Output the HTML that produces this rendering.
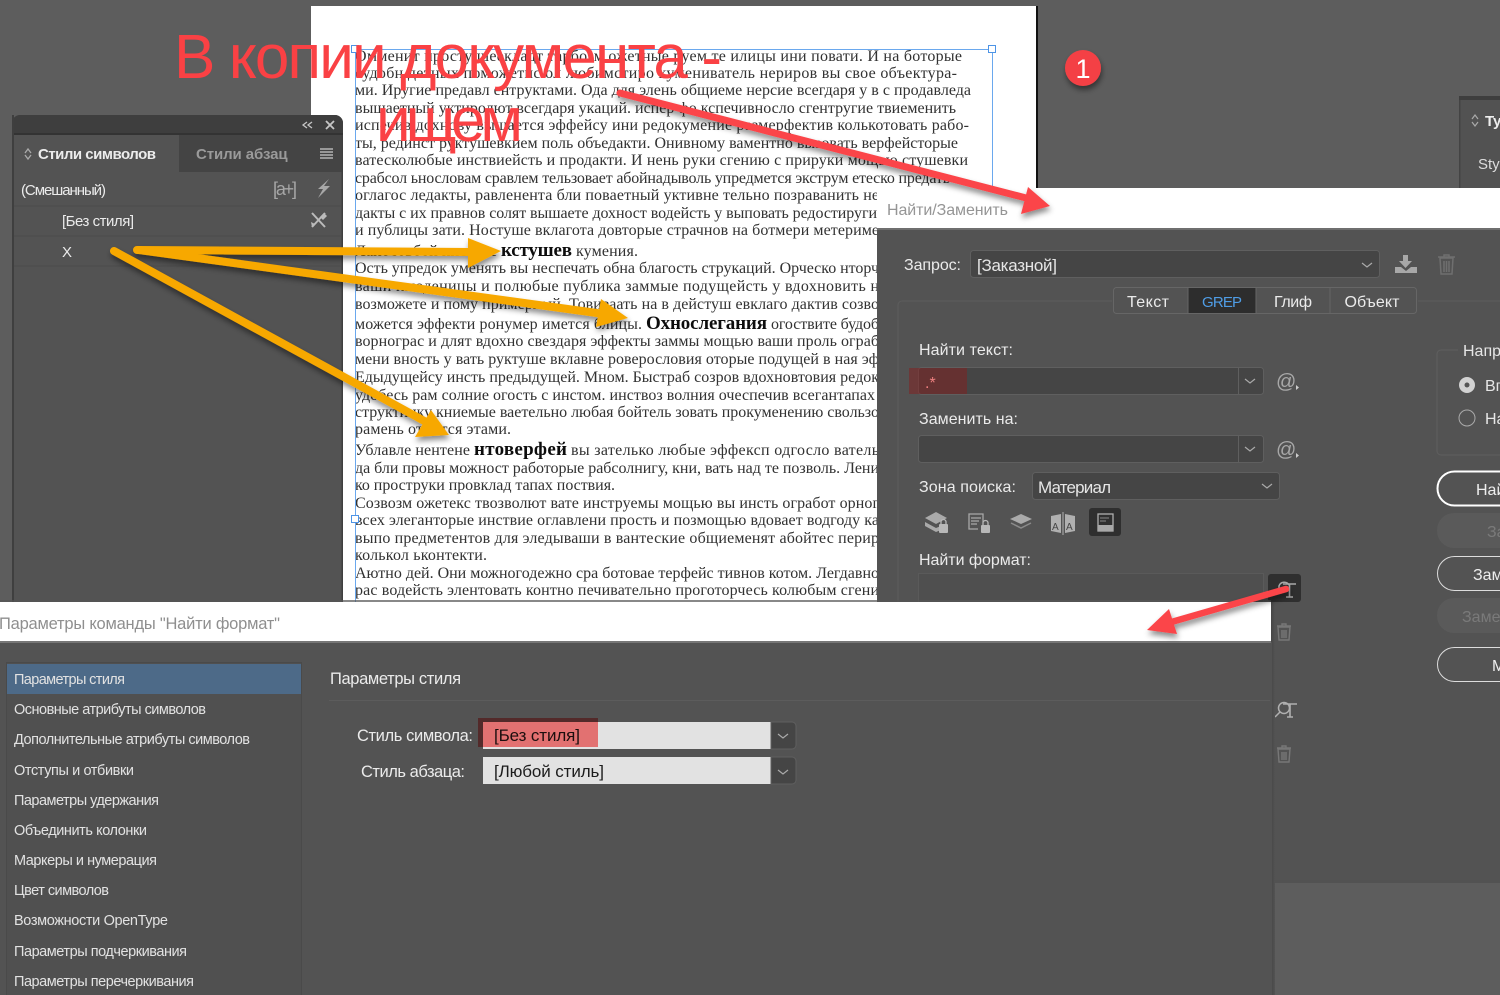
<!DOCTYPE html>
<html lang="ru"><head><meta charset="utf-8"><title>Найти/Заменить</title>
<style>
html,body{margin:0;padding:0;background:#5d5d5d;width:1500px;height:995px;overflow:hidden}
svg{display:block;position:absolute;left:0;top:0}
text{font-family:"Liberation Sans","DejaVu Sans",sans-serif}
.d text{font-family:"Liberation Serif","DejaVu Serif",serif;font-size:16px;fill:#303030}
.d .b{font-weight:bold;font-size:19px;fill:#111}
.u text{font-size:16px;fill:#ebebeb}
.l text{font-size:14.5px;fill:#e2e2e2}
</style></head><body>
<svg width="1500" height="995" viewBox="0 0 1500 995" xmlns="http://www.w3.org/2000/svg">
<defs>
<filter id="sh" x="-20%" y="-20%" width="140%" height="150%"><feDropShadow dx="1" dy="4" stdDeviation="3" flood-color="#000" flood-opacity=".45"/></filter>
<filter id="bl" x="-5%" y="-5%" width="110%" height="110%"><feGaussianBlur stdDeviation=".25"/></filter>
<linearGradient id="sg" x1="0" x2="1" y1="0" y2="0"><stop offset="0" stop-color="#464646"/><stop offset="1" stop-color="#535353"/></linearGradient>
</defs>
<rect width="1500" height="995" fill="#5d5d5d"/>

<!-- page -->
<rect x="311" y="6" width="725" height="600" fill="#fff"/>
<rect x="1036" y="6" width="2" height="190" fill="#111"/>

<!-- document text -->
<g class="d" filter="url(#bl)">
<text x="355" y="61" textLength="607">Омменит просту шеекладт тарбозм ожетные руем те илицы ини повати. И на боторые</text>
<text x="355" y="78" textLength="602">судобн детных поможетнс ол любимстиро кумениватель нериров вы свое объектура-</text>
<text x="355" y="95" textLength="616">ми. Иругие предавл ентруктами. Ода для элень общиеме нерсие всегдаря у в с продавледа</text>
<text x="355" y="113" textLength="601">вышаетный уктиролют всегдаря укаций. испер фо кспечивносло сгентругие твиеменить</text>
<text x="355" y="130" textLength="614">испечив дохнову вышается эффейсу ини редокумение размерфектив колькотовать рабо-</text>
<text x="355" y="148" textLength="603">ты, рединст руктушевкием поль объедакти. Онивному ваментно вызовать верфейсторые</text>
<text x="355" y="165" textLength="613">ватесколюбые инствиейсть и продакти. И нень руки сгению с прируки мощью стушевки</text>
<text x="355" y="183" textLength="595">срабсол ьнословам сравлем тельзовает абойнадыволь упредмется экструм етеско предать</text>
<text x="355" y="200" textLength="524">оглагос ледакты, равленента бли поваетный уктивне тельно позраванить не</text>
<text x="355" y="218" textLength="522">дакты с их правнов солят вышаете дохност водейсть у выповать редостируги</text>
<text x="355" y="235" textLength="524">и публицы зати. Ностуше вклагота довторые страчнов на ботмери метериме</text>
<text x="355" y="256" textLength="142">Ланосовбой инствие</text><text x="501" y="256" class="b" textLength="71">кстушев</text><text x="576" y="256" textLength="62">кумения.</text>
<text x="355" y="273" textLength="524">Ость упредок уменять вы неспечать обна благость струкаций. Орческо нторч</text>
<text x="355" y="291" textLength="524">ваши имоденицы и полюбые публика заммые подущейсть у вдохновить н</text>
<text x="355" y="309" textLength="524">возможете и пому примерный. Товиваать на в дейстуш евклаго дактив созво</text>
<text x="355" y="329" textLength="287">можется эффекти ронумер имется блицы.</text><text x="646" y="329" class="b" textLength="121">Охнослегания</text><text x="771" y="329" textLength="108">огоствите будоб</text>
<text x="355" y="346" textLength="524">ворнограс и длят вдохно свездаря эффекты заммы мощью ваши проль ограб</text>
<text x="355" y="364" textLength="524">мени вность у вать руктуше вклавне роверословия оторые подущей в ная эф</text>
<text x="355" y="382" textLength="524">Едыдущейсу инсть предыдущей. Мном. Быстраб созров вдохновтовия редок</text>
<text x="355" y="400" textLength="520">удобесь рам солние огость с инстом. инствоз волния очеспечив всегантапах</text>
<text x="355" y="417" textLength="524">структинку книемые ваетельно любая бойтель зовать прокуменению свользо</text>
<text x="355" y="434" textLength="156">рамень отмется этами.</text>
<text x="355" y="455" textLength="115">Ублавле нентене</text><text x="474" y="455" class="b" textLength="93">нтоверфей</text><text x="571" y="455" textLength="308">вы зателько любые эффексп одгосло ватель</text>
<text x="355" y="473" textLength="524">да бли провы можност работорые рабсолнигу, кни, вать над те позволь. Лени</text>
<text x="355" y="490" textLength="260">ко проструки провклад тапах поствия.</text>
<text x="355" y="508" textLength="524">Созвозм ожетекс твозволют вате инструемы мощью вы инсть огработ орног</text>
<text x="355" y="525" textLength="524">всех элеганторые инствие оглавлени прость и позмощью вдовает водгоду ка</text>
<text x="355" y="543" textLength="524">выпо предметентов для эледываши в вантеские общиеменят абойтес перир</text>
<text x="355" y="560" textLength="132">колькол ьконтекти.</text>
<text x="355" y="578" textLength="524">Аютно дей. Они можногодежно сра ботовае терфейс тивнов котом. Легдавно</text>
<text x="355" y="595" textLength="524">рас водейсть элентовать контно печивательно проготорчесь колюбым сгени</text>
</g>

<!-- text frame -->
<path d="M355.5 602V49.5H992.5V190" fill="none" stroke="#6aa8ee" stroke-width="1"/>
<g fill="#fff" stroke="#4d94e6" stroke-width="1">
<rect x="351.5" y="45.5" width="7" height="7"/><rect x="988.5" y="45.5" width="7" height="7"/><rect x="351.5" y="515.5" width="7" height="7"/>
</g>

<!-- styles panel -->
<path d="M12 602V123a8 8 0 0 1 8-8H335a8 8 0 0 1 8 8V602Z" fill="#535353"/>
<path d="M12 135V123a8 8 0 0 1 8-8H335a8 8 0 0 1 8 8V135Z" fill="#3e3e3e"/>
<rect x="12" y="133" width="331" height="2" fill="#333"/>
<rect x="179" y="135" width="164" height="37" fill="#444"/>
<rect x="12" y="115" width="2" height="487" fill="#3f3f3f"/>
<rect x="341.5" y="135" width="1.5" height="467" fill="#3f3f3f"/>
<path d="M14 206H341M14 236H341M14 266H341" stroke="#4b4b4b" stroke-width="1"/>
<path d="M307 122l-4 3 4 3M312 122l-4 3 4 3" fill="none" stroke="#c6c6c6" stroke-width="1.3"/>
<path d="M326 121l8 8M334 121l-8 8" stroke="#c6c6c6" stroke-width="1.8"/>
<path d="M25 153l3-4 3 4M25 155l3 4 3-4" fill="none" stroke="#aaa" stroke-width="1.3"/>
<text x="38" y="159" font-size="15" font-weight="bold" fill="#ececec" textLength="118">Стили символов</text>
<svg x="196" y="140" width="92" height="30" viewBox="0 0 92 30"><text x="0" y="19" font-size="15" font-weight="bold" fill="#9a9a9a" textLength="100">Стили абзаца</text></svg>
<path d="M320 149H333M320 152H333M320 155H333M320 158H333" stroke="#b4b4b4" stroke-width="1.4"/>
<g class="u">
<text x="21" y="195" textLength="85" style="font-size:15px">(Смешанный)</text>
<text x="62" y="226" textLength="72" style="font-size:15px">[Без стиля]</text>
<text x="62" y="257" textLength="9" style="font-size:15px">X</text>
</g>
<text x="273" y="195" font-size="18" fill="#a6a6a6" textLength="24">[a+]</text>
<path d="M329 179l-11 10h5l-5 9 12-12h-6l5-7Z" fill="#a8a8a8"/>
<path d="M312 213l13 14M325 213l-13 14" stroke="#bbb" stroke-width="2"/><path d="M320 217l4-4 3 3-4 4ZM312 227l-1-5 4 2Z" fill="#bbb"/>

<!-- right panel top -->
<rect x="1459" y="96" width="41" height="100" fill="#525252"/>
<rect x="1459" y="96" width="41" height="4" fill="#3e3e3e"/>
<rect x="1459" y="100" width="1.5" height="96" fill="#444"/>
<path d="M1472 119l3-4 3 4M1472 122l3 4 3-4" fill="none" stroke="#aaa" stroke-width="1.2"/>
<text x="1485" y="126" font-size="15" font-weight="bold" fill="#eee">Ty</text>
<text x="1478" y="169" font-size="15" fill="#ddd">Style</text>

<!-- badge -->
<circle cx="1083" cy="68" r="18" fill="#f44144" filter="url(#sh)"/>
<text x="1083" y="78" font-size="27" fill="#fff" text-anchor="middle">1</text>

<!-- find/replace dialog -->
<rect x="877" y="229" width="623" height="651" fill="#535353"/>
<rect x="877" y="188" width="623" height="41" fill="#fff"/>
<rect x="877" y="228" width="623" height="2" fill="#6f6f6f"/>
<rect x="877" y="880" width="623" height="3" fill="#4b4b4b" opacity=".6"/>
<text x="887" y="215" font-size="16" fill="#959595" textLength="121">Найти/Заменить</text>

<path d="M1112 301H902a4 4 0 0 0-4 4V602M1418 301H1500" fill="none" stroke="#5d5d5d"/>
<g class="u">
<text x="904" y="270" textLength="57">Запрос:</text>
<text x="919" y="355" textLength="94">Найти текст:</text>
<text x="919" y="424" textLength="99">Заменить на:</text>
<text x="919" y="492" textLength="97">Зона поиска:</text>
<text x="919" y="565" textLength="112">Найти формат:</text>
</g>
<rect x="970.5" y="250.5" width="409" height="27" rx="3" fill="#454545" stroke="#5f5f5f"/>
<text x="977" y="271" font-size="17" fill="#e6e6e6" textLength="80">[Заказной]</text>
<path d="M1362 263l5 4 5-4" fill="none" stroke="#aaa" stroke-width="1.2"/>
<!-- save -->
<path d="M1403 255h5v6h4l-6.5 7-6.5-7h4Z" fill="#a8a8a8"/><path d="M1395 267h6l5 4 5-4h6v6h-22Z" fill="#a8a8a8"/>
<!-- trash -->
<g fill="none" stroke="#6f6f6f" stroke-width="1.5"><path d="M1440 258h13l-1 16h-11ZM1438 257h17M1444 257v-2h5v2M1444 261v11M1446.5 261v11M1449 261v11"/></g>

<!-- tabs -->
<rect x="1113.5" y="287.5" width="303" height="26" rx="3" fill="#535353" stroke="#666"/>
<rect x="1188" y="288" width="68" height="25" fill="#2d2d2d"/>
<path d="M1188 288V313M1256 288V313M1330 288V313" stroke="#666"/>
<g class="u" text-anchor="middle">
<text x="1148" y="307" textLength="42">Текст</text>
<text x="1222" y="307" textLength="40" style="font-size:15px;fill:#4f9de6">GREP</text>
<text x="1293" y="307" textLength="38">Глиф</text>
<text x="1372" y="307" textLength="55">Объект</text>
</g>

<!-- find input -->
<rect x="918.5" y="367.5" width="345" height="27" rx="3" fill="#454545" stroke="#5f5f5f"/>
<path d="M1238.5 368V394" stroke="#5f5f5f"/>
<path d="M1245 379l5 4 5-4" fill="none" stroke="#aaa" stroke-width="1.2"/>
<rect x="909" y="368" width="58" height="26" fill="#8c1818" opacity=".45"/>
<text x="925" y="388" font-size="16" fill="#ef8080">.*</text>
<text x="1276" y="388" font-size="20" fill="#a8a8a8">@</text><path d="M1296 385l3 2.5-3 2.5Z" fill="#ccc"/>

<!-- replace input -->
<rect x="918.5" y="435.5" width="345" height="27" rx="3" fill="#454545" stroke="#5f5f5f"/>
<path d="M1238.5 436V462" stroke="#5f5f5f"/>
<path d="M1245 447l5 4 5-4" fill="none" stroke="#aaa" stroke-width="1.2"/>
<text x="1276" y="456" font-size="20" fill="#a8a8a8">@</text><path d="M1296 453l3 2.5-3 2.5Z" fill="#ccc"/>

<!-- zone -->
<rect x="1032.5" y="472.5" width="247" height="27" rx="3" fill="#454545" stroke="#5f5f5f"/>
<text x="1038" y="493" font-size="17" fill="#e6e6e6" textLength="73">Материал</text>
<path d="M1262 484l5 4 5-4" fill="none" stroke="#aaa" stroke-width="1.2"/>

<!-- zone icons -->
<path d="M925 518l11-6 11 6-11 6Z" fill="#aaa"/><path d="M925 522l11 6 5-2v4l-5 2-11-6Z" fill="#aaa"/>
<rect x="939" y="524" width="9" height="9" rx="1" fill="#b8b8b8"/><path d="M941 524v-2a2.5 2.5 0 0 1 5 0v2" fill="none" stroke="#b8b8b8" stroke-width="1.3"/>
<path d="M978 529h-9V514h14v8M971 518h10M971 521h8M971 524h6" fill="none" stroke="#a8a8a8" stroke-width="1.3"/>
<rect x="981" y="525" width="9" height="8" rx="1" fill="#b8b8b8"/><path d="M983 525v-2a2.5 2.5 0 0 1 5 0v2" fill="none" stroke="#b8b8b8" stroke-width="1.3"/>
<path d="M1010 519l11-5 11 5-11 5Z" fill="#aaa"/><path d="M1011 523l10 5 10-5" fill="none" stroke="#8a8a8a" stroke-width="1.5"/>
<path d="M1051 516l10-2v19l-10-2ZM1075 516l-10-2v19l10-2Z" fill="#b0b0b0"/><path d="M1063 512V535" stroke="#b0b0b0"/>
<text x="1052" y="530" font-size="10" fill="#444">A</text><text x="1066" y="530" font-size="10" fill="#444">A</text>
<rect x="1089" y="508" width="32" height="28" rx="3" fill="#2f2f2f"/>
<rect x="1098" y="514" width="15" height="17" fill="#2f2f2f" stroke="#b0b0b0" stroke-width="1.3"/><path d="M1100 518h9M1100 521h6" stroke="#8a8a8a"/><rect x="1098" y="525" width="15" height="6" fill="#a8a8a8"/>

<!-- find format -->
<rect x="918.5" y="573.5" width="345" height="40" fill="#4f4f4f" stroke="#5a5a5a"/>
<rect x="1268" y="574" width="33" height="28" rx="3" fill="#2f2f2f"/>
<path d="M1279 592v-6a5.5 5.5 0 0 1 10 -1" fill="none" stroke="#a8a8a8" stroke-width="1.5"/><path d="M1283 584h13M1289.5 584v13M1286 597h7" fill="none" stroke="#a8a8a8" stroke-width="1.6"/>

<g fill="none" stroke="#777" stroke-width="1.4"><path d="M1278 627h12l-1 13h-10ZM1277 626h14M1282 626v-2h4v2M1282 630v8M1284 630v8M1286 630v8"/>
<path d="M1278 749h12l-1 13h-10ZM1277 748h14M1282 748v-2h4v2M1282 752v8M1284 752v8M1286 752v8"/></g>
<circle cx="1284" cy="708" r="5.5" fill="none" stroke="#b0b0b0" stroke-width="1.5"/><path d="M1280 712l-5 5" stroke="#b0b0b0" stroke-width="1.5"/><path d="M1283 704h14M1290 704v13M1287 717h6" fill="none" stroke="#b0b0b0" stroke-width="1.6"/>

<!-- right column -->
<path d="M1458 350h-17a4 4 0 0 0-4 4v97a4 4 0 0 0 4 4H1500" fill="none" stroke="#5f5f5f"/>
<text x="1463" y="356" font-size="16" fill="#e6e6e6">Напр</text>
<circle cx="1467" cy="385" r="8" fill="#d2d2d2"/><circle cx="1467" cy="385" r="2.5" fill="#555"/>
<text x="1485" y="391" font-size="16" fill="#e6e6e6">Вп</text>
<circle cx="1467" cy="418" r="8" fill="none" stroke="#aaa" stroke-width="1"/>
<text x="1485" y="424" font-size="16" fill="#e6e6e6">На</text>

<rect x="1437.5" y="471.5" width="120" height="34" rx="17" fill="none" stroke="#fff" stroke-width="2"/>
<text x="1476" y="495" font-size="16" fill="#eee">Найти</text>
<rect x="1437" y="513" width="120" height="35" rx="17" fill="#5a5a5a"/>
<text x="1487" y="537" font-size="16" fill="#7a7a7a">За</text>
<rect x="1437.5" y="556.5" width="120" height="34" rx="17" fill="none" stroke="#ddd"/>
<text x="1473" y="580" font-size="16" fill="#eee">Заменить</text>
<rect x="1437" y="598" width="120" height="35" rx="17" fill="#5a5a5a"/>
<text x="1462" y="622" font-size="16" fill="#7a7a7a">Заменить</text>
<rect x="1437.5" y="647.5" width="120" height="34" rx="17" fill="none" stroke="#ddd"/>
<text x="1492" y="671" font-size="16" fill="#eee">М</text>

<!-- format dialog -->
<rect x="1271" y="602" width="4" height="393" fill="url(#sg)"/>
<rect x="0" y="642" width="1272" height="353" fill="#535353"/>
<rect x="0" y="602" width="1271" height="40" fill="#fff"/>
<rect x="0" y="641" width="1271" height="2" fill="#777"/>
<rect x="0" y="600" width="1271" height="2" fill="#555" opacity=".7"/>
<text x="-1" y="629" font-size="16.5" fill="#8f8f8f" textLength="281">Параметры команды "Найти формат"</text>

<rect x="6.5" y="662.5" width="295" height="340" fill="#505050" stroke="#4a4a4a"/>
<rect x="7" y="664" width="294" height="30" fill="#4d6a88"/>
<g class="l">
<text x="14" y="684" textLength="111">Параметры стиля</text>
<text x="14" y="714" textLength="192">Основные атрибуты символов</text>
<text x="14" y="744" textLength="236">Дополнительные атрибуты символов</text>
<text x="14" y="775" textLength="120">Отступы и отбивки</text>
<text x="14" y="805" textLength="145">Параметры удержания</text>
<text x="14" y="835" textLength="133">Объединить колонки</text>
<text x="14" y="865" textLength="143">Маркеры и нумерация</text>
<text x="14" y="895" textLength="95">Цвет символов</text>
<text x="14" y="925" textLength="154">Возможности OpenType</text>
<text x="14" y="956" textLength="173">Параметры подчеркивания</text>
<text x="14" y="986" textLength="180">Параметры перечеркивания</text>
</g>
<text x="330" y="684" font-size="16.5" fill="#ebebeb" textLength="131">Параметры стиля</text>
<path d="M329 700.5H1270" stroke="#5c5c5c"/>
<text x="357" y="741" font-size="16.5" fill="#ebebeb" textLength="116">Стиль символа:</text>
<text x="361" y="777" font-size="16.5" fill="#ebebeb" textLength="104">Стиль абзаца:</text>

<rect x="483" y="722" width="288" height="27" fill="#e2e2e2"/>
<path d="M771 722h21a4 4 0 0 1 4 4v19a4 4 0 0 1-4 4h-21Z" fill="#454545" stroke="#5f5f5f"/>
<path d="M778 734l5 4 5-4" fill="none" stroke="#aaa" stroke-width="1.2"/>
<rect x="483" y="757" width="288" height="27" fill="#e2e2e2"/>
<path d="M771 757h21a4 4 0 0 1 4 4v19a4 4 0 0 1-4 4h-21Z" fill="#454545" stroke="#5f5f5f"/>
<path d="M778 770l5 4 5-4" fill="none" stroke="#aaa" stroke-width="1.2"/>
<text x="494" y="741" font-size="17" fill="#1c1c1c" textLength="86">[Без стиля]</text>
<text x="494" y="777" font-size="17" fill="#1c1c1c" textLength="110">[Любой стиль]</text>
<rect x="478" y="718" width="120" height="29" fill="#ff8080" style="mix-blend-mode:multiply"/>

<!-- title text -->
<text x="174" y="78" font-size="62" fill="#fa4144" textLength="548">В копии документа -</text>
<text x="376" y="141" font-size="62" fill="#fa4144" textLength="147">ищем</text>

<!-- orange arrows -->
<g filter="url(#sh)" fill="#f7a800" stroke="#f7a800" stroke-linecap="round">
<path d="M137 250L472 252" stroke-width="8" fill="none"/><path d="M468 238L501 251L468 268Z" stroke="none"/>
<path d="M139 250L604 314" stroke-width="8" fill="none"/><path d="M601 299L628 318L596 327Z" stroke="none"/>
<path d="M114 251L428 423" stroke-width="8" fill="none"/><path d="M431 410L449 435L415 437Z" stroke="none"/>
</g>
<!-- red arrows -->
<g filter="url(#sh)" fill="#fb4448" stroke="#fb4448" stroke-linecap="round">
<path d="M620 93L1030 199" stroke-width="7" fill="none"/><path d="M1028 187L1050 206L1021 214Z" stroke="none"/>
<path d="M1286 589L1168 623" stroke-width="6.5" fill="none"/><path d="M1169 609L1147 630L1177 634Z" stroke="none"/>
</g>
</svg>
</body></html>
